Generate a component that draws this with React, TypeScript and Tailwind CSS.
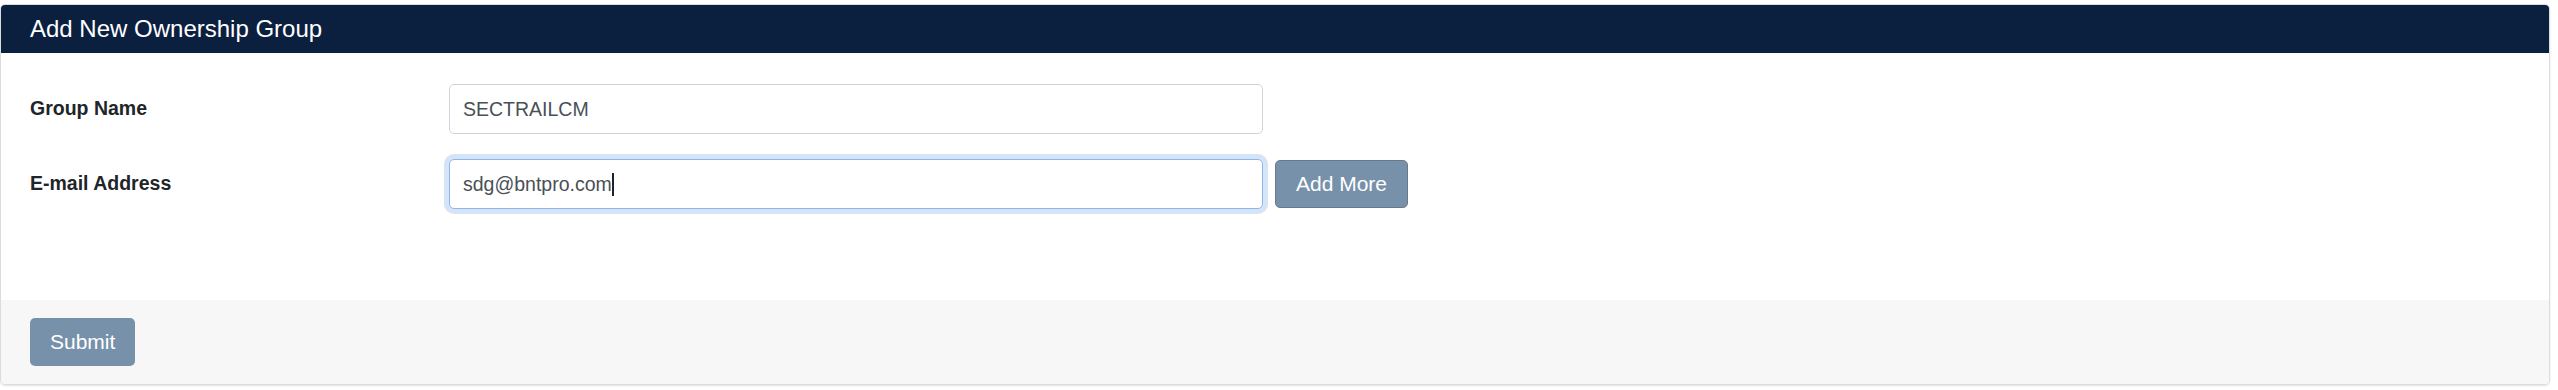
import { useState } from "react";

const font = "font-['Liberation_Sans',Arial,sans-serif]";

export default function App() {
    const [groupName, setGroupName] = useState("SECTRAILCM");
    const [email, setEmail] = useState("sdg@bntpro.com");

    return (
        <div className={`min-h-[390px] bg-white pt-[4px] pr-[8px] ${font}`}>
            <div className="overflow-hidden rounded-[5px] border border-[#dcdcdc] shadow-[0_1px_2px_rgba(0,0,0,0.12)]">
                {/* Header */}
                <div className="flex h-[48px] items-center bg-[#0b1f3f] px-[29px]">
                    <h5 className="text-[24px] leading-none text-white">Add New Ownership Group</h5>
                </div>

                {/* Body */}
                <div className="flex flex-col gap-[25px] bg-white pt-[31px] pb-[91px] pl-[29px]">
                    <div className="flex items-center">
                        <label htmlFor="groupName" className="w-[419px] text-[19.5px] font-bold text-[#212529]">
                            Group Name
                        </label>
                        <input
                            id="groupName"
                            type="text"
                            value={groupName}
                            onChange={(e) => setGroupName(e.target.value)}
                            className="h-[50px] w-[814px] rounded-[5px] border border-[#ced4da] bg-white px-[13px] text-[19.5px] text-[#495057] outline-none"
                        />
                    </div>

                    <div className="flex items-center">
                        <label htmlFor="email" className="w-[419px] text-[19.5px] font-bold text-[#212529]">
                            E-mail Address
                        </label>
                        <div className="relative">
                            <input
                                id="email"
                                type="email"
                                value={email}
                                onChange={(e) => setEmail(e.target.value)}
                                className="h-[50px] w-[814px] rounded-[5px] border border-[#8fb4ef] bg-white px-[13px] text-[19.5px] text-[#495057] caret-transparent outline-none ring-[5px] ring-[#d5e4f7]"
                            />
                            {/* caret */}
                            <span className="pointer-events-none absolute top-[14px] left-[163px] h-[23px] w-[2px] bg-[#222]" />
                        </div>
                        <button
                            type="button"
                            className="ml-[12px] h-[48px] rounded-[5px] border border-[#687b8d] bg-[#7891aa] px-[20px] text-[21px] text-white"
                        >
                            Add More
                        </button>
                    </div>
                </div>

                {/* Footer */}
                <div className="bg-[#f7f7f7] px-[29px] pt-[18px] pb-[18px]">
                    <button
                        type="submit"
                        className="h-[48px] rounded-[5px] bg-[#7891aa] px-[20px] text-[21px] text-white"
                    >
                        Submit
                    </button>
                </div>
            </div>
        </div>
    );
}
